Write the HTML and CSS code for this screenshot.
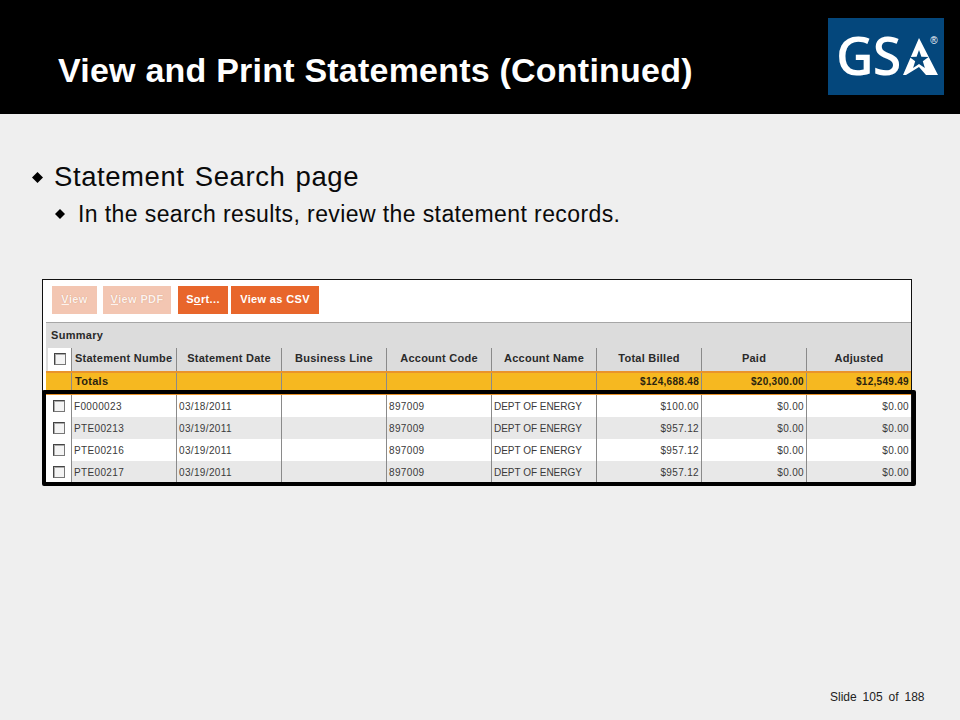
FILE: index.html
```html
<!DOCTYPE html>
<html lang="en">
<head>
<meta charset="utf-8">
<title>View and Print Statements (Continued)</title>
<link rel="stylesheet" href="styles.css">
</head>
<body>
<div class="slide">
  <header class="top">
    <h1 class="title">View and Print Statements (Continued)</h1>
    <svg class="logo" viewBox="0 0 116 77" role="img" aria-label="GSA">
      <rect width="116" height="77" fill="#04477c"/>
      <text x="8" y="57" class="logo-text">GS</text>
      <polygon fill="#fff" points="91,20 110,57 98,57 91,49 78,57 75,57"/>
      <polygon fill="#04477c" points="91,32 93.4,38.8 100.5,38.9 94.8,43.2 96.9,50.1 91,46 85.1,50.1 87.2,43.2 81.5,38.9 88.6,38.8"/>
      <text x="106" y="25.5" class="logo-reg">®</text>
    </svg>
  </header>

  <main class="body">
    <div class="bullet level1">
      <svg class="diamond d1" viewBox="0 0 10 10"><polygon points="5,0 10,5 5,10 0,5"/></svg>
      <span>Statement Search page</span>
    </div>
    <div class="bullet level2">
      <svg class="diamond d2" viewBox="0 0 10 10"><polygon points="5,0 10,5 5,10 0,5"/></svg>
      <span>In the search results, review the statement records.</span>
    </div>

    <section class="panel">
      <div class="toolbar">
        <span class="btn off w45"><u>V</u>iew</span>
        <span class="btn off w68"><u>V</u>iew PDF</span>
        <span class="btn w50 gap-l">S<u>o</u>rt...</span>
        <span class="btn w88">View as CSV</span>
      </div>
      <div class="summary">Summary</div>
      <div class="grid head">
        <div class="chk"><i class="box"></i></div>
        <div class="clip">Statement Numbe</div>
        <div>Statement Date</div>
        <div>Business Line</div>
        <div>Account Code</div>
        <div>Account Name</div>
        <div>Total Billed</div>
        <div>Paid</div>
        <div>Adjusted</div>
      </div>
      <div class="grid totals">
        <div></div>
        <div>Totals</div>
        <div></div><div></div><div></div><div></div>
        <div class="num">$124,688.48</div>
        <div class="num">$20,300.00</div>
        <div class="num">$12,549.49</div>
      </div>
      <div class="grid row">
        <div class="chk"><i class="box"></i></div>
        <div>F0000023</div><div>03/18/2011</div><div></div><div>897009</div><div class="caps">DEPT OF ENERGY</div>
        <div class="num">$100.00</div><div class="num">$0.00</div><div class="num">$0.00</div>
      </div>
      <div class="grid row alt">
        <div class="chk"><i class="box"></i></div>
        <div>PTE00213</div><div>03/19/2011</div><div></div><div>897009</div><div class="caps">DEPT OF ENERGY</div>
        <div class="num">$957.12</div><div class="num">$0.00</div><div class="num">$0.00</div>
      </div>
      <div class="grid row">
        <div class="chk"><i class="box"></i></div>
        <div>PTE00216</div><div>03/19/2011</div><div></div><div>897009</div><div class="caps">DEPT OF ENERGY</div>
        <div class="num">$957.12</div><div class="num">$0.00</div><div class="num">$0.00</div>
      </div>
      <div class="grid row alt">
        <div class="chk"><i class="box"></i></div>
        <div>PTE00217</div><div>03/19/2011</div><div></div><div>897009</div><div class="caps">DEPT OF ENERGY</div>
        <div class="num">$957.12</div><div class="num">$0.00</div><div class="num">$0.00</div>
      </div>
      <div class="frame"></div>
    </section>
  </main>

  <footer class="foot">Slide 105 of 188</footer>
</div>
</body>
</html>
```
FILE: styles.css
```css
* { box-sizing: border-box; }
html, body { margin: 0; padding: 0; }
body { font-family: "Liberation Sans", Arial, sans-serif; background: #efefef; color: #000; }
.slide { width: 960px; height: 720px; display: flex; flex-direction: column; overflow: hidden; }

.top { height: 114px; background: #000; display: flex; align-items: flex-start; justify-content: space-between; padding: 18px 16px 0 58px; flex: none; }
.title { margin: 33px 0 0; color: #fff; font-size: 34px; line-height: 38px; font-weight: 700; letter-spacing: 0.22px; white-space: nowrap; }
.logo { width: 116px; height: 77px; display: block; flex: none; }
.logo-text { font-family: "Open Sans", sans-serif; font-weight: 600; font-size: 52px; fill: #fff; letter-spacing: -1px; }
.logo-reg { font-family: "Liberation Sans", sans-serif; font-size: 10px; fill: #fff; text-anchor: middle; }

.body { flex: 1; padding: 0; }
.bullet { display: flex; align-items: center; white-space: nowrap; color: #0a0a0a; }
.level1 { margin-top: 46px; padding-left: 32px; height: 34px; font-size: 27.5px; letter-spacing: 0.58px; word-spacing: 2px; }
.level2 { margin-top: 3px; padding-left: 55px; height: 34px; font-size: 23px; letter-spacing: 0.4px; }
.diamond { display: block; flex: none; fill: #000; }
.d1 { width: 11px; height: 11px; margin-right: 11px; }
.d2 { width: 10px; height: 10px; margin-right: 13px; }

.panel { position: relative; margin: 48px 0 0 42px; width: 870px; background: #fff; border: 1px solid #111; border-bottom: 0; padding: 0 0 0 3px; }
.toolbar { height: 42px; display: flex; align-items: flex-start; gap: 6px; padding: 6px 0 0 6px; }
.btn { height: 28px; display: flex; align-items: center; justify-content: center; padding-bottom: 2px; background: #e8662b; color: #fff; font-size: 11px; font-weight: 700; letter-spacing: 0.35px; }
.btn.off { background: #f3c6b2; color: #fdf3ee; text-shadow: 0 0 1px #d08f72; }
.w45 { width: 45px; }
.w68 { width: 68px; }
.w50 { width: 50px; }
.w88 { width: 88px; margin-left: -3px; }
.gap-l { margin-left: 1px; }

.summary { height: 23px; background: #dcdcdc; border-top: 1px solid #a6a6a6; padding: 5px 0 0 5px; font-size: 11px; line-height: 14px; font-weight: 700; color: #2a2a2a; letter-spacing: 0.3px; }

.grid { display: grid; grid-template-columns: 25px repeat(8, 105px); font-size: 11px; }
.grid > div { border-left: 1px solid #8a8a8a; display: flex; align-items: center; white-space: nowrap; overflow: hidden; min-width: 0; }
.grid > div:first-child { border-left: 0; }

.head { height: 26px; background: #dcdcdc; font-weight: 700; color: #2a2a2a; letter-spacing: 0.25px; }
.head > div { justify-content: center; height: 23px; margin-top: 3px; padding-bottom: 4px; }
.head > .clip { justify-content: flex-start; padding-left: 3px; }
.head > .chk { background: #fff; margin-left: 2px; border-left: 0; padding-bottom: 2px; }

.totals { height: 24px; background: #f6b820; border-top: 2px solid #e9932b; border-bottom: 2px solid #e9932b; font-weight: 700; color: #2a2410; letter-spacing: 0.3px; }
.totals > div { padding: 0 0 4px 3px; }
.totals > .num { justify-content: flex-end; padding: 0 2px 4px 0; font-size: 10px; }

.row { height: 22px; background: #fff; color: #3a3a3a; font-size: 10px; letter-spacing: 0.35px; }
.row > div { padding-left: 2px; }
.row > .num { justify-content: flex-end; padding: 0 2px 0 0; }
.row > .caps { letter-spacing: -0.02px; }
.alt { background: #e8e8e8; }
.chk { justify-content: center; background: #fff; }
.row > .chk { padding-left: 0; }

.box { display: block; width: 12px; height: 12px; border: 1px solid #444; border-right-color: #777; border-bottom-color: #777; background: #f4f4f4; box-shadow: inset 1px 1px 0 #aaa; }

.frame { position: absolute; left: -1px; top: 110px; width: 874px; height: 96px; border: 4px solid #000; border-radius: 2px; pointer-events: none; }

.foot { position: absolute; left: 830px; top: 690px; font-size: 12px; line-height: 14px; color: #222; word-spacing: 2.6px; white-space: nowrap; }
```
